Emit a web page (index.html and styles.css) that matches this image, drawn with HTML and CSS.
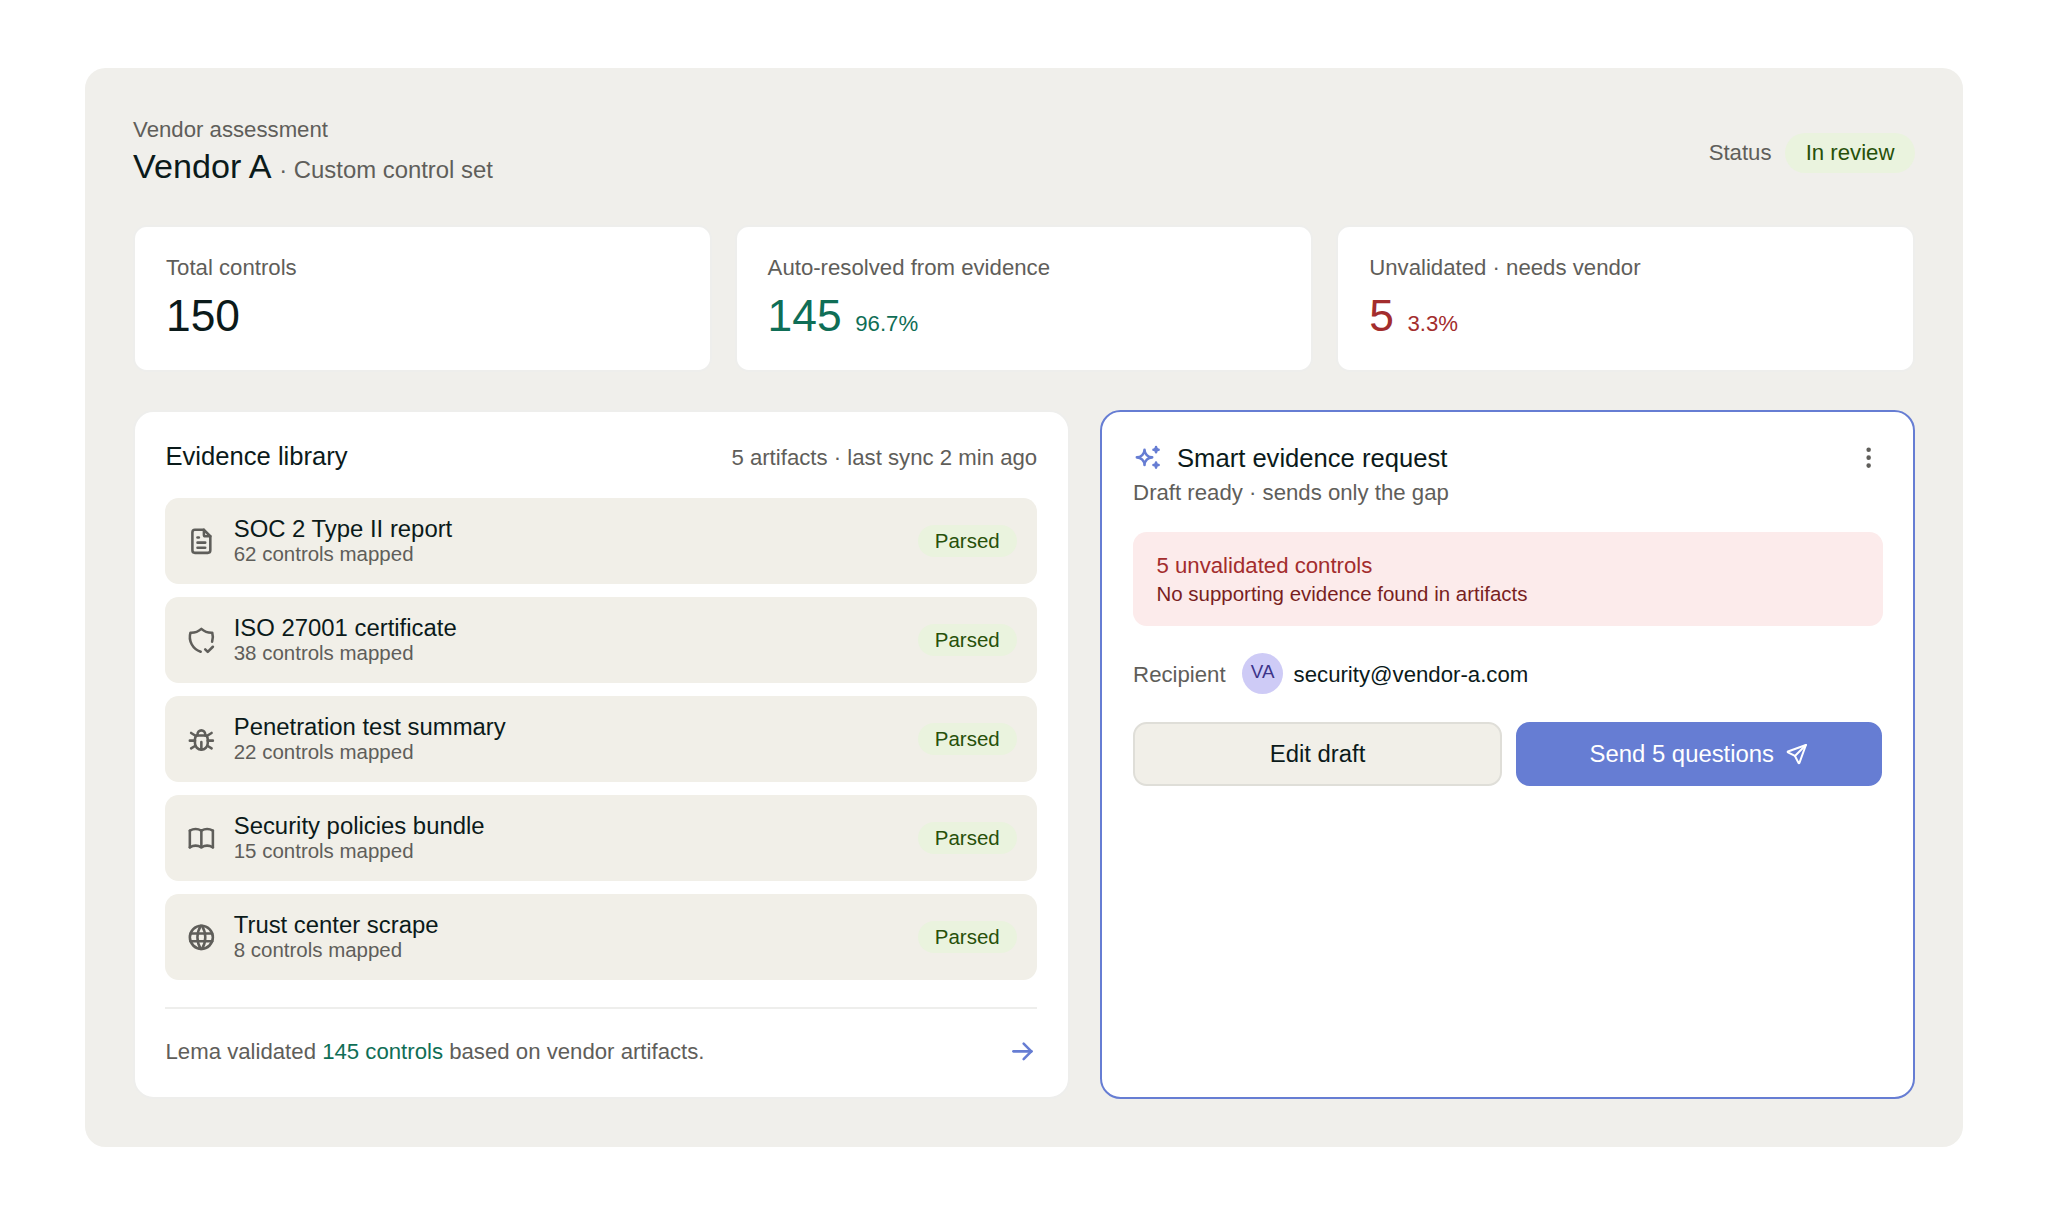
FILE: index.html
```html
<!DOCTYPE html>
<html lang="en">
<head>
    <meta charset="UTF-8">
    <meta name="viewport" content="width=device-width, initial-scale=1.0">
    <title>Vendor assessment</title>
    <link rel="stylesheet" href="styles.css">
</head>
<body>
    <main class="panel">
        <header class="page-header">
            <div class="page-title">
                <div class="eyebrow">Vendor assessment</div>
                <h1>Vendor A <span>· Custom control set</span></h1>
            </div>
            <div class="status">
                <span>Status</span>
                <span class="badge badge-large">In review</span>
            </div>
        </header>

        <section class="stats">
            <div class="stat">
                <div class="stat-label">Total controls</div>
                <div class="stat-value">150</div>
            </div>
            <div class="stat">
                <div class="stat-label">Auto-resolved from evidence</div>
                <div class="stat-value green">145<small>96.7%</small></div>
            </div>
            <div class="stat">
                <div class="stat-label">Unvalidated · needs vendor</div>
                <div class="stat-value red">5<small>3.3%</small></div>
            </div>
        </section>

        <div class="columns">
            <section class="card library">
                <div class="card-header">
                    <h2>Evidence library</h2>
                    <span class="muted">5 artifacts · last sync 2 min ago</span>
                </div>

                <ul class="artifacts">
                    <li class="artifact">
                        <svg class="icon" viewBox="0 0 24 24"><path d="M14 3v4a1 1 0 0 0 1 1h4"/><path d="M17 21h-10a2 2 0 0 1 -2 -2v-14a2 2 0 0 1 2 -2h7l5 5v11a2 2 0 0 1 -2 2z"/><path d="M9 9h1"/><path d="M9 13h6"/><path d="M9 17h6"/></svg>
                        <div class="artifact-text">
                            <div class="artifact-name">SOC 2 Type II report</div>
                            <div class="artifact-count">62 controls mapped</div>
                        </div>
                        <span class="badge">Parsed</span>
                    </li>
                    <li class="artifact">
                        <svg class="icon" viewBox="0 0 24 24"><path d="M11.46 20.846a12 12 0 0 1 -7.96 -14.846a12 12 0 0 0 8.5 -3a12 12 0 0 0 8.5 3a12 12 0 0 1 -.09 7.06"/><path d="M15 19l2 2l4 -4"/></svg>
                        <div class="artifact-text">
                            <div class="artifact-name">ISO 27001 certificate</div>
                            <div class="artifact-count">38 controls mapped</div>
                        </div>
                        <span class="badge">Parsed</span>
                    </li>
                    <li class="artifact">
                        <svg class="icon" viewBox="0 0 24 24"><path d="M9 9v-1a3 3 0 0 1 6 0v1"/><path d="M8 9h8a6 6 0 0 1 1 3v3a5 5 0 0 1 -10 0v-3a6 6 0 0 1 1 -3"/><path d="M3 13h4"/><path d="M17 13h4"/><path d="M12 20v-6"/><path d="M4 19l3.35 -2"/><path d="M20 19l-3.35 -2"/><path d="M4 7l3.75 2.4"/><path d="M20 7l-3.75 2.4"/></svg>
                        <div class="artifact-text">
                            <div class="artifact-name">Penetration test summary</div>
                            <div class="artifact-count">22 controls mapped</div>
                        </div>
                        <span class="badge">Parsed</span>
                    </li>
                    <li class="artifact">
                        <svg class="icon" viewBox="0 0 24 24"><path d="M3 19a9 9 0 0 1 9 0a9 9 0 0 1 9 0"/><path d="M3 6a9 9 0 0 1 9 0a9 9 0 0 1 9 0"/><path d="M3 6v13"/><path d="M12 6v13"/><path d="M21 6v13"/></svg>
                        <div class="artifact-text">
                            <div class="artifact-name">Security policies bundle</div>
                            <div class="artifact-count">15 controls mapped</div>
                        </div>
                        <span class="badge">Parsed</span>
                    </li>
                    <li class="artifact">
                        <svg class="icon" viewBox="0 0 24 24"><path d="M3 12a9 9 0 1 0 18 0a9 9 0 0 0 -18 0"/><path d="M3.6 9h16.8"/><path d="M3.6 15h16.8"/><path d="M11.5 3a17 17 0 0 0 0 18"/><path d="M12.5 3a17 17 0 0 1 0 18"/></svg>
                        <div class="artifact-text">
                            <div class="artifact-name">Trust center scrape</div>
                            <div class="artifact-count">8 controls mapped</div>
                        </div>
                        <span class="badge">Parsed</span>
                    </li>
                </ul>

                <div class="library-footer">
                    <span class="footer-text">Lema validated <span class="green">145 controls</span> based on vendor artifacts.</span>
                    <svg class="icon blue" viewBox="0 0 24 24"><path d="M5 12h14"/><path d="M13 18l6 -6"/><path d="M13 6l6 6"/></svg>
                </div>
            </section>

            <section class="card request">
                <div class="request-header">
                    <svg class="icon blue" viewBox="0 0 24 24"><path d="M16 18a2 2 0 0 1 2 2a2 2 0 0 1 2 -2a2 2 0 0 1 -2 -2a2 2 0 0 1 -2 2zm0 -12a2 2 0 0 1 2 2a2 2 0 0 1 2 -2a2 2 0 0 1 -2 -2a2 2 0 0 1 -2 2zm-7 12a6 6 0 0 1 6 -6a6 6 0 0 1 -6 -6a6 6 0 0 1 -6 6a6 6 0 0 1 6 6z"/></svg>
                    <h2>Smart evidence request</h2>
                    <svg class="icon icon-menu" viewBox="0 0 24 24"><circle cx="12" cy="5" r="1"/><circle cx="12" cy="12" r="1"/><circle cx="12" cy="19" r="1"/></svg>
                </div>
                <div class="request-sub">Draft ready · sends only the gap</div>

                <div class="alert">
                    <div class="alert-title">5 unvalidated controls</div>
                    <div class="alert-text">No supporting evidence found in artifacts</div>
                </div>

                <div class="recipient">
                    <span class="muted">Recipient</span>
                    <span class="avatar">VA</span>
                    <span class="email">security@vendor-a.com</span>
                </div>

                <div class="actions">
                    <button class="btn">Edit draft</button>
                    <button class="btn btn-primary">Send 5 questions
                        <svg class="icon icon-send" viewBox="0 0 24 24"><path d="M10 14l11 -11"/><path d="M21 3l-6.5 18a.55 .55 0 0 1 -1 0l-3.5 -7l-7 -3.5a.55 .55 0 0 1 0 -1l18 -6.5"/></svg>
                    </button>
                </div>
            </section>
        </div>
    </main>
</body>
</html>
```
FILE: styles.css
```css
* {
    box-sizing: border-box;
}
body {
    margin: 0;
    padding: 68.3px 85.3px;
    background: #fff;
    color: #0b1a1a;
    font-family: "Liberation Sans", Arial, sans-serif;
    font-size: 22.19px;
    line-height: 26px;
}
h1, h2 {
    margin: 0;
    font-weight: normal;
}
h2 {
    font-size: 25.6px;
    line-height: 30px;
}
.panel {
    height: 1078.4px;
    padding: 47.8px;
    background: #f0efeb;
    border-radius: 20.5px;
}
.muted, .eyebrow, .status, .stat-label, .request-sub {
    color: #5f5e5a;
}
.green {
    color: #0f6e56;
}
.red {
    color: #a32d2d;
}
.page-header {
    display: flex;
    justify-content: space-between;
    align-items: center;
    margin-bottom: 36px;
}
.page-title {
    padding-top: 1px;
}
h1 {
    font-size: 34.13px;
    line-height: 46px;
}
h1 span {
    font-size: 23.89px;
    line-height: 1;
    color: #5f5e5a;
}
.status {
    display: flex;
    align-items: center;
    gap: 13.65px;
    padding-top: 1px;
}
.badge {
    padding: 3.65px 17.07px;
    border-radius: 17px;
    background: #eaf3de;
    color: #27500a;
    font-size: 20.48px;
    line-height: 24px;
}
.badge-large {
    padding: 6.8px 20.48px;
    border-radius: 20px;
    font-size: 22.19px;
    line-height: 26px;
}
.stats {
    display: grid;
    grid-template-columns: repeat(3, 1fr);
    gap: 23px;
    margin-bottom: 37.4px;
}
.stat {
    height: 147.3px;
    padding: 27.5px 30.4px 27.5px 30.9px;
    border: 2px solid #eeeeec;
    border-radius: 13.65px;
    background: #fff;
}
.stat-value {
    margin-top: 9px;
    color: #0b1a1a;
    font-size: 44.37px;
    line-height: 52px;
}
.stat-value.green {
    color: #0f6e56;
}
.stat-value.red {
    color: #a32d2d;
}
.stat-value small {
    margin-left: 13.65px;
    font-size: 22.19px;
    line-height: 1;
}
.columns {
    display: grid;
    grid-template-columns: 1.15fr 1fr;
    gap: 30px;
    height: 689.5px;
}
.card {
    padding: 28.9px 30.4px;
    border: 2px solid #eeeeec;
    border-radius: 20.5px;
    background: #fff;
}
.library {
    padding-right: 30.9px;
}
.card-header {
    display: flex;
    justify-content: space-between;
    align-items: baseline;
    margin-bottom: 27.7px;
}
.artifacts {
    display: flex;
    flex-direction: column;
    gap: 13.65px;
    margin: 0;
    padding: 0;
    list-style: none;
}
.artifact {
    display: flex;
    align-items: center;
    gap: 17.07px;
    height: 85.35px;
    padding: 0 20.48px;
    border-radius: 13.65px;
    background: #f1efe8;
}
.artifact-text {
    flex: 1;
}
.artifact-name {
    font-size: 23.89px;
    line-height: 26px;
}
.artifact-count {
    color: #5f5e5a;
    font-size: 20.48px;
    line-height: 24px;
}
.icon {
    flex: none;
    width: 30.72px;
    height: 30.72px;
    fill: none;
    stroke: #5f5e5a;
    stroke-width: 2;
    stroke-linecap: round;
    stroke-linejoin: round;
}
.icon.blue {
    stroke: #667dd3;
}
.library-footer {
    display: flex;
    justify-content: space-between;
    align-items: center;
    margin-top: 27.5px;
    padding-top: 26.4px;
    border-top: 2px solid #eeeeec;
    color: #5f5e5a;
}
.footer-text {
    padding-top: 2px;
}
.request {
    padding-top: 30.4px;
    padding-left: 31px;
    border-color: #667dd3;
}
.request-header {
    display: flex;
    align-items: center;
}
.request-header h2 {
    flex: 1;
    margin-left: 13.2px;
}
.icon-menu {
    width: 27.3px;
    height: 27.3px;
}
.request-sub {
    margin-top: 7.3px;
}
.alert {
    margin-top: 26.1px;
    padding: 21px 23.4px 20.2px;
    border-radius: 13.65px;
    background: #fcebeb;
}
.alert-title {
    color: #a32d2d;
}
.alert-text {
    margin-top: 2.3px;
    color: #791f1f;
    font-size: 20.48px;
    line-height: 24px;
}
.recipient {
    display: flex;
    align-items: center;
    margin-top: 27.5px;
}
.recipient .muted, .email {
    padding-top: 2px;
}
.avatar {
    width: 41px;
    height: 41px;
    margin: 0 10.5px 0 16.5px;
    border-radius: 50%;
    background: #cecbf6;
    color: #3c3489;
    font-size: 18.77px;
    line-height: 38.5px;
    text-align: center;
}
.actions {
    display: grid;
    grid-template-columns: 1.005fr 1fr;
    gap: 13.65px;
    margin-top: 27.3px;
}
.btn {
    display: flex;
    align-items: center;
    justify-content: center;
    gap: 10.5px;
    height: 64.8px;
    border: 2px solid #dfded8;
    border-radius: 13.65px;
    background: #f1efe8;
    color: #0b1a1a;
    font-family: inherit;
    font-size: 23.89px;
}
.btn-primary {
    border-color: #667dd3;
    background: #667dd3;
    color: #fff;
}
.icon-send {
    width: 23.9px;
    height: 23.9px;
    stroke: #fff;
}
```
